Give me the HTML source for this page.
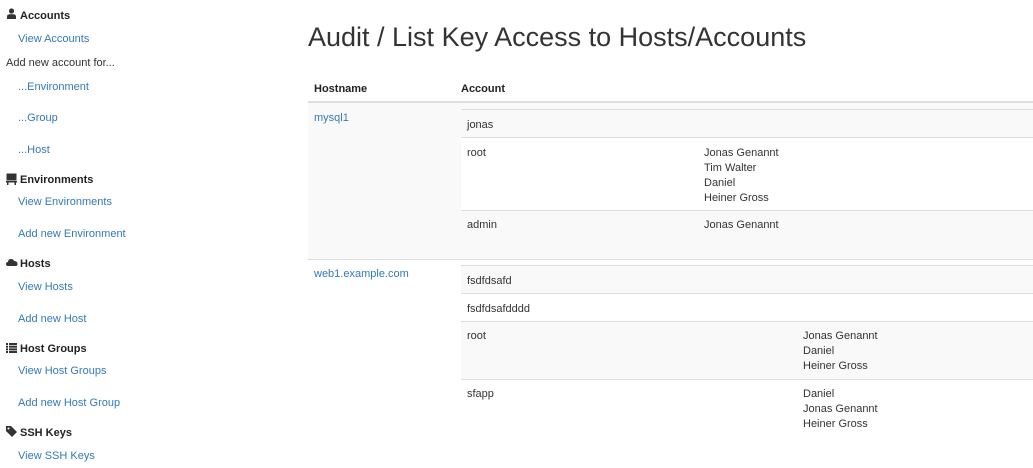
<!DOCTYPE html>
<html><head><meta charset="utf-8"><style>
*{margin:0;padding:0;box-sizing:border-box}
body{width:1033px;height:468px;overflow:hidden;background:#fff;font-family:"Liberation Sans",sans-serif;font-size:11px;color:#333;position:relative}
.t{position:absolute;white-space:nowrap;line-height:14px;margin-top:1px}
a,.a{color:#337ab7;text-decoration:none}
.h{font-weight:bold;color:#222}
.bx{position:absolute}
svg{position:absolute}
</style></head><body>
<svg style="left:6px;top:8px" width="11" height="11" viewBox="0 0 11 11"><circle cx="5.5" cy="3" r="2.6" fill="#333"/><path d="M1 11 L1 8.5 Q1 6.5 3.5 6.3 L7.5 6.3 Q10 6.5 10 8.5 L10 11Z" fill="#333"/></svg>
<div class="t h" style="left:20px;top:8px">Accounts</div>
<div class="t a" style="left:18px;top:31px">View Accounts</div>
<div class="t" style="left:6px;top:55px">Add new account for...</div>
<div class="t a" style="left:18px;top:79px">...Environment</div>
<div class="t a" style="left:18px;top:110px">...Group</div>
<div class="t a" style="left:18px;top:142px">...Host</div>
<svg style="left:6px;top:173px" width="11" height="12" viewBox="0 0 11 12"><rect x="0.5" y="0.5" width="10" height="7" fill="#333"/><rect x="0" y="8" width="11" height="1.5" fill="#333"/><rect x="1" y="9.5" width="1.5" height="2.5" fill="#333"/><rect x="8.5" y="9.5" width="1.5" height="2.5" fill="#333"/></svg>
<div class="t h" style="left:20px;top:172px">Environments</div>
<div class="t a" style="left:18px;top:194px">View Environments</div>
<div class="t a" style="left:18px;top:226px">Add new Environment</div>
<svg style="left:6px;top:258px" width="12" height="8" viewBox="0 0 12 8"><path d="M2 8 Q0 8 0 6 Q0 4 2 4 Q2 1 5 1 Q7.5 1 8 3 Q11 3 11.5 5.5 Q12 8 9.5 8Z" fill="#333"/></svg>
<div class="t h" style="left:20px;top:256px">Hosts</div>
<div class="t a" style="left:18px;top:279px">View Hosts</div>
<div class="t a" style="left:18px;top:311px">Add new Host</div>
<svg style="left:6px;top:343px" width="11" height="10" viewBox="0 0 11 10"><g fill="#333"><rect x="0" y="0" width="2" height="2"/><rect x="3" y="0" width="8" height="2"/><rect x="0" y="2.7" width="2" height="2"/><rect x="3" y="2.7" width="8" height="2"/><rect x="0" y="5.4" width="2" height="2"/><rect x="3" y="5.4" width="8" height="2"/><rect x="0" y="8" width="2" height="2"/><rect x="3" y="8" width="8" height="2"/></g></svg>
<div class="t h" style="left:20px;top:341px">Host Groups</div>
<div class="t a" style="left:18px;top:363px">View Host Groups</div>
<div class="t a" style="left:18px;top:395px">Add new Host Group</div>
<svg style="left:6px;top:426px" width="11" height="11" viewBox="0 0 11 11"><path d="M0 0 L5 0 L11 6 L6 11 L0 5Z" fill="#333"/><circle cx="2.5" cy="2.5" r="1" fill="#fff"/></svg>
<div class="t h" style="left:20px;top:425px">SSH Keys</div>
<div class="t a" style="left:18px;top:448px">View SSH Keys</div>

<div class="t" style="left:308px;top:20px;font-size:27px;line-height:34px;color:#333;margin-top:0">Audit / List Key Access to Hosts/Accounts</div>
<div class="t h" style="left:314px;top:81px">Hostname</div>
<div class="t h" style="left:461px;top:81px">Account</div>
<div class="bx" style="left:308px;top:101px;width:725px;height:2px;background:#ddd"></div>
<div class="bx" style="left:308px;top:103px;width:725px;height:156px;background:#f9f9f9"></div>
<div class="bx" style="left:308px;top:259px;width:725px;height:1px;background:#ddd"></div>
<div class="t a" style="left:314px;top:110px">mysql1</div>
<div class="bx" style="left:461px;top:109px;width:572px;height:1px;background:#ddd"></div>
<div class="bx" style="left:461px;top:137px;width:572px;height:1px;background:#ddd"></div>
<div class="bx" style="left:461px;top:138px;width:572px;height:72px;background:#fff"></div>
<div class="bx" style="left:461px;top:210px;width:572px;height:1px;background:#ddd"></div>
<div class="t" style="left:467px;top:117px">jonas</div>
<div class="t" style="left:467px;top:145px">root</div>
<div class="t" style="left:704px;top:145px;line-height:15px">Jonas Genannt<br>Tim Walter<br>Daniel<br>Heiner Gross</div>
<div class="t" style="left:467px;top:217px">admin</div>
<div class="t" style="left:704px;top:217px">Jonas Genannt</div>

<div class="t a" style="left:314px;top:266px">web1.example.com</div>
<div class="bx" style="left:461px;top:265px;width:572px;height:1px;background:#ddd"></div>
<div class="bx" style="left:461px;top:266px;width:572px;height:27px;background:#f9f9f9"></div>
<div class="bx" style="left:461px;top:293px;width:572px;height:1px;background:#ddd"></div>
<div class="bx" style="left:461px;top:321px;width:572px;height:1px;background:#ddd"></div>
<div class="bx" style="left:461px;top:322px;width:572px;height:57px;background:#f9f9f9"></div>
<div class="bx" style="left:461px;top:379px;width:572px;height:1px;background:#ddd"></div>
<div class="t" style="left:467px;top:273px">fsdfdsafd</div>
<div class="t" style="left:467px;top:301px">fsdfdsafdddd</div>
<div class="t" style="left:467px;top:328px">root</div>
<div class="t" style="left:803px;top:328px;line-height:15px">Jonas Genannt<br>Daniel<br>Heiner Gross</div>
<div class="t" style="left:467px;top:386px">sfapp</div>
<div class="t" style="left:803px;top:386px;line-height:15px">Daniel<br>Jonas Genannt<br>Heiner Gross</div>
</body></html>
